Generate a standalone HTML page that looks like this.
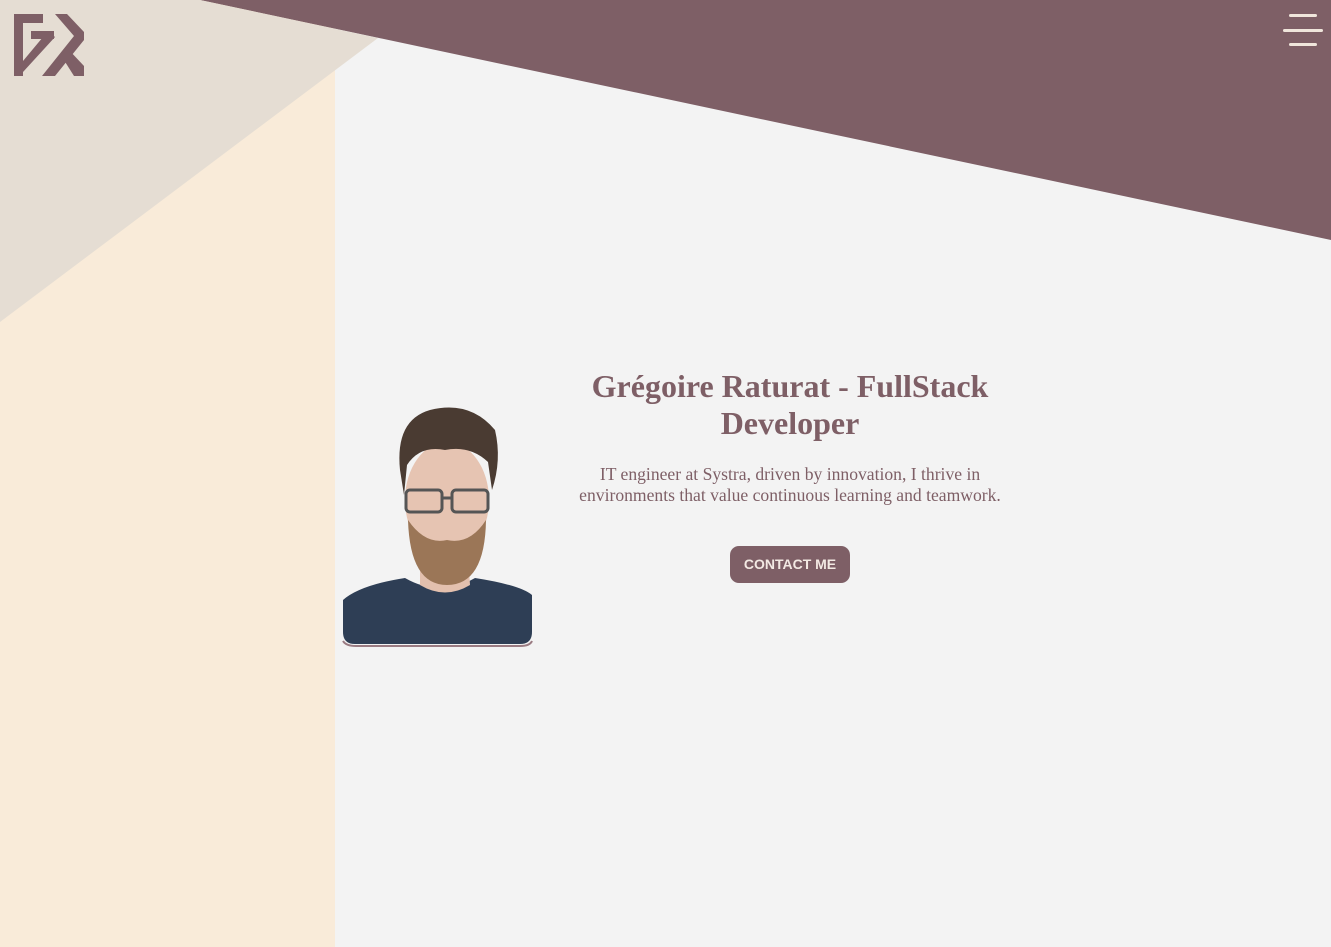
<!DOCTYPE html>
<html><head><meta charset="utf-8"><style>
html,body{margin:0;padding:0;width:1331px;height:947px;overflow:hidden;background:#f3f3f3;font-family:"Liberation Serif",serif}
.bg{position:absolute;left:0;top:0}
h1{position:absolute;left:540px;width:500px;top:368px;margin:0;text-align:center;color:#7e5f66;font-size:32px;line-height:37px;font-weight:bold}
p{position:absolute;left:550px;width:480px;top:464px;margin:0;text-align:center;color:#7e5f66;font-size:17.6px;line-height:21px}
.btn{position:absolute;left:730px;top:546px;width:120px;height:37px;background:#7e5f66;color:#f3e9e3;border-radius:9px;font-family:"Liberation Sans",sans-serif;font-weight:bold;font-size:14px;line-height:37px;text-align:center}
.bar{position:absolute;height:3px;background:#f0e6dc;border-radius:2px}
</style></head><body>
<svg class="bg" width="1331" height="947">
<rect x="0" y="0" width="335" height="947" fill="#f9ebd9"/>
<polygon points="200,0 1331,0 1331,240" fill="#7e5f66"/>
<polygon points="0,0 200,0 378,38 0,322" fill="#e5ddd3"/>
<g fill="#7e5f66">
<rect x="14" y="14" width="9" height="62"/>
<rect x="14" y="14" width="29" height="9"/>
<rect x="31" y="31" width="23" height="8"/>
<polygon points="48,31 55,37 23,72 23,61"/>
<polygon points="55,14 67,14 84,32 84,40 55,76 42,76 74,36"/>
<polygon points="62,57 68,49 84,66 84,76 74,76"/>
</g>
<defs><clipPath id="c"><path d="M343,400 H532 V632 Q532,644 520,644 H355 Q343,644 343,632 Z"/></clipPath></defs>
<g clip-path="url(#c)">
<path d="M343,600 Q360,585 405,578 Q440,598 475,578 Q520,585 532,595 V650 H343 Z" fill="#2e3e55"/>
<path d="M420,560 L420,585 Q445,600 470,585 L468,555 Z" fill="#e3c0ae"/>
<ellipse cx="447" cy="500" rx="42" ry="58" fill="#e6c4b2"/>
<path d="M408,520 Q410,585 447,585 Q485,585 486,520 Q470,545 447,540 Q425,545 408,520 Z" fill="#9b7657"/>
<path d="M400,470 Q395,420 430,410 Q470,400 495,430 Q502,460 492,490 L488,462 Q470,445 445,450 Q420,445 407,465 L404,495 Z" fill="#4a3b32"/>
<rect x="406" y="490" width="36" height="22" rx="4" fill="none" stroke="#555" stroke-width="3"/>
<rect x="452" y="490" width="36" height="22" rx="4" fill="none" stroke="#555" stroke-width="3"/>
<line x1="442" y1="498" x2="452" y2="498" stroke="#555" stroke-width="3"/>
</g>
<path d="M343,641 Q346,646 356,646 H520 Q530,646 532,641" fill="none" stroke="#9a7b82" stroke-width="2"/>
</svg>
<div class="bar" style="left:1289px;top:14px;width:28px"></div>
<div class="bar" style="left:1283px;top:29px;width:40px"></div>
<div class="bar" style="left:1289px;top:43px;width:28px"></div>
<h1>Grégoire Raturat - FullStack<br>Developer</h1>
<p>IT engineer at Systra, driven by innovation, I thrive in<br>environments that value continuous learning and teamwork.</p>
<div class="btn">CONTACT ME</div>
</body></html>
